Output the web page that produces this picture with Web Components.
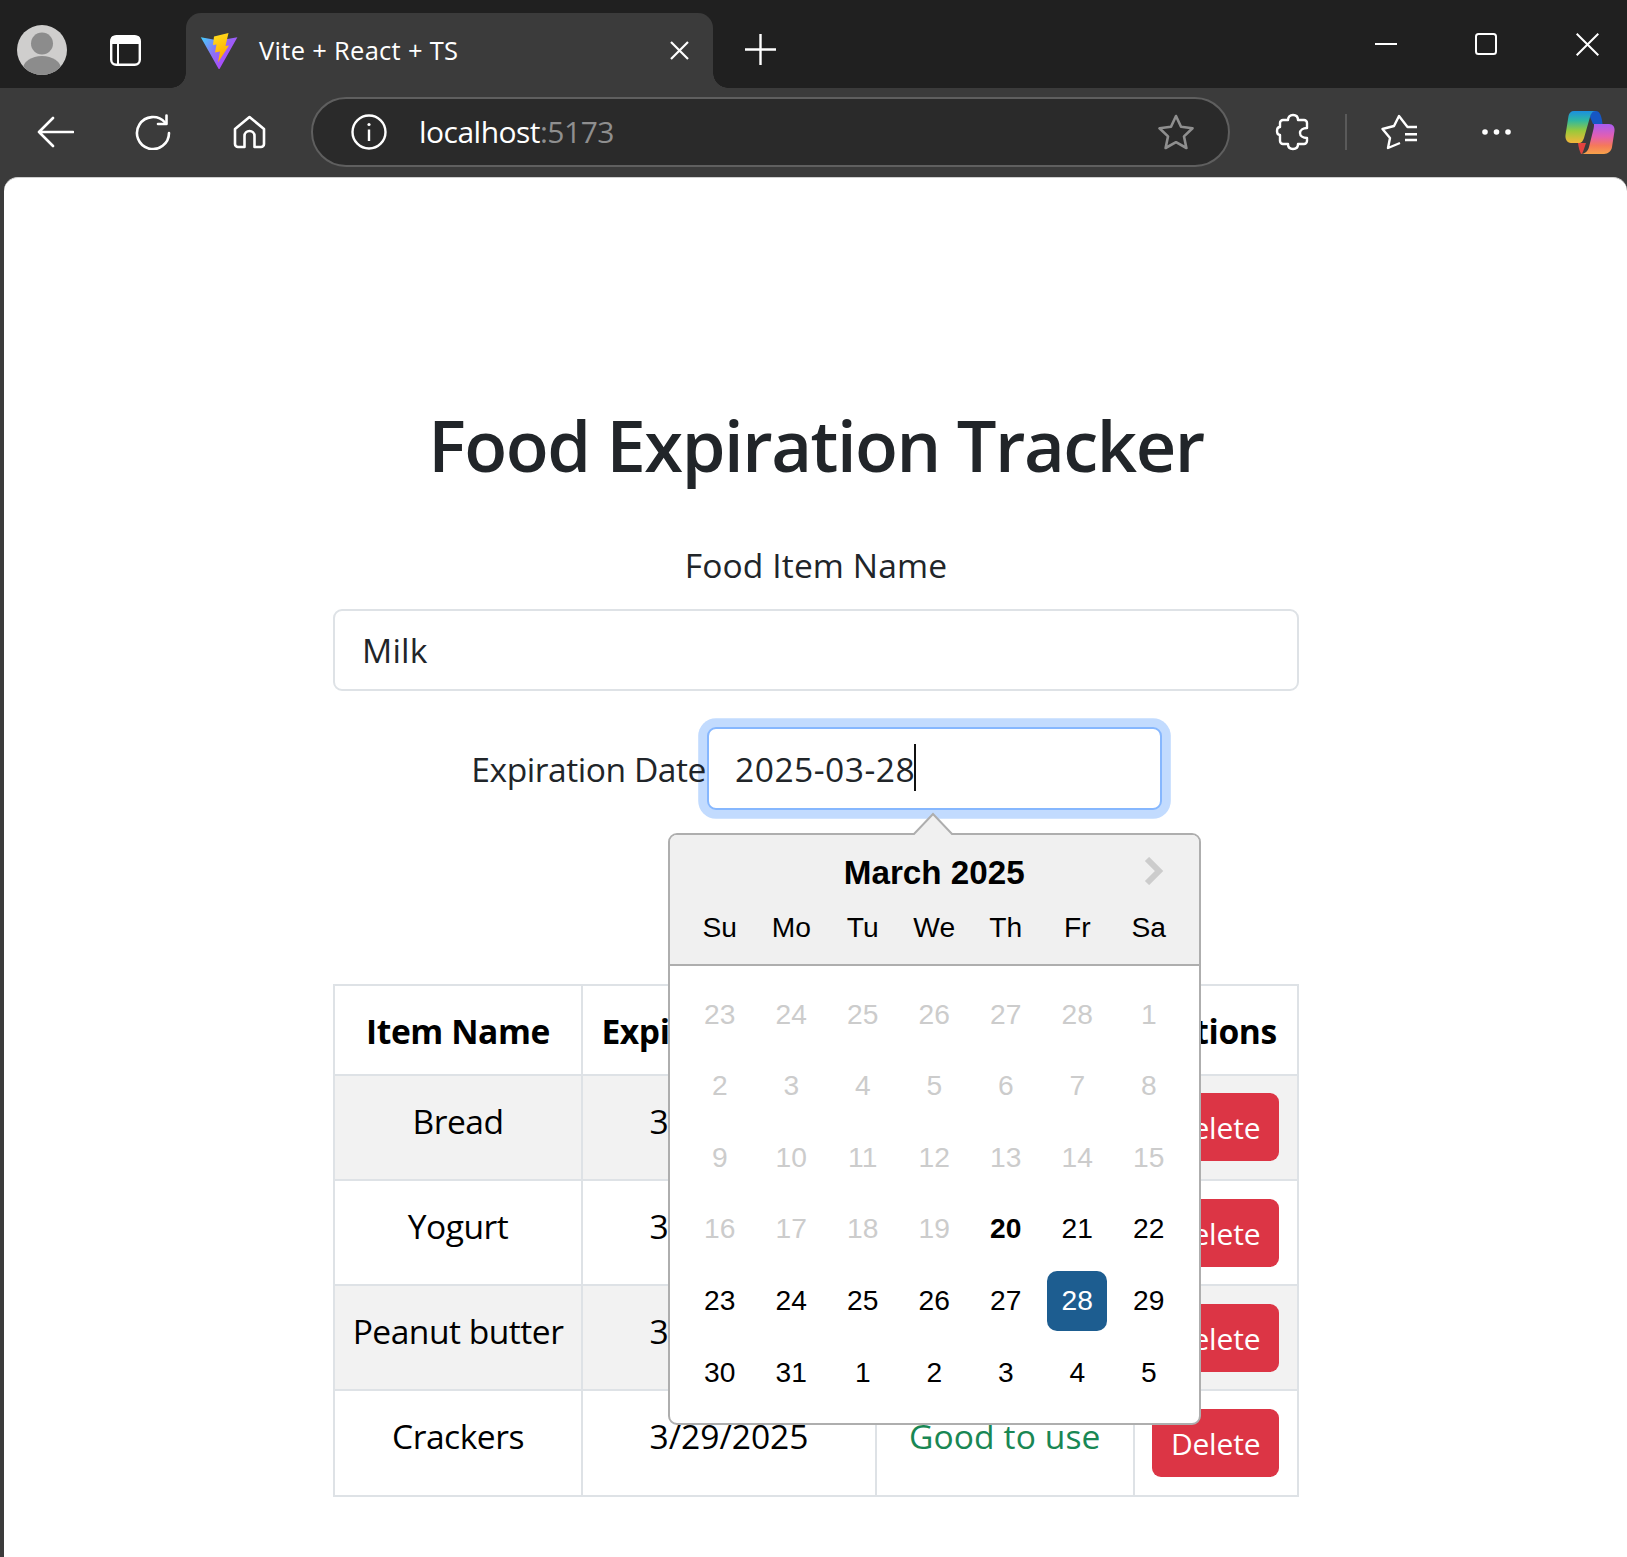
<!DOCTYPE html>
<html lang="en">
<head>
<meta charset="utf-8">
<title>Vite + React + TS</title>
<style>
    html, body { margin: 0; padding: 0; height: 100%; overflow: hidden; background: #3b3b3b; }
    body { font-family: "Open Sans", "Noto Sans", sans-serif; }
</style>
</head>
<body>
<browser-window>
    <tracker-page>
        <food-form></food-form>
        <food-table></food-table>
    </tracker-page>
</browser-window>

<template id="browser_window_tpl">
    <style>
        :host { display: flex; flex-direction: column; height: 100vh; background: #3b3b3b; color: #fff; }
        .strip { display: flex; align-items: flex-end; height: 88px; background: #202020; padding-left: 17px; flex: none; box-sizing: border-box; }
        .avatar { width: 50px; height: 50px; margin-bottom: 13px; }
        .tabs-icon { width: 31px; height: 31px; margin: 0 0 22px 43px; }
        .tab { position: relative; display: flex; align-items: center; width: 527px; height: 75px; margin-left: 45px; background: #3b3b3b; border-radius: 15px 15px 0 0; box-sizing: border-box; padding: 0 24px 0 14px; }
        .tab::before, .tab::after { content: ""; position: absolute; bottom: 0; width: 15px; height: 15px; }
        .tab::before { left: -15px; background: radial-gradient(circle at 0 0, #202020 14.5px, #3b3b3b 15px); }
        .tab::after { right: -15px; background: radial-gradient(circle at 100% 0, #202020 14.5px, #3b3b3b 15px); }
        .favicon { width: 38px; height: 37px; flex: none; }
        .tab-title { margin: 0 0 1px 21px; font-size: 25.5px; letter-spacing: .3px; white-space: nowrap; flex: 1; }
        .tab-close { width: 19px; height: 19px; flex: none; }
        .new-tab { width: 31px; height: 31px; margin: 0 0 23px 32px; }
        .window-buttons { display: flex; margin-left: auto; margin-bottom: 33px; align-items: center; height: 22px; padding-right: 28px; }
        .window-buttons svg { display: block; }
        .minimize { width: 22px; height: 22px; }
        .maximize { width: 22px; height: 22px; margin-left: 78.5px; }
        .close { width: 23px; height: 23px; margin-left: 79px; }
        .toolbar { display: flex; align-items: center; height: 89px; flex: none; padding-left: 37px; box-sizing: border-box; padding-bottom: 1px; }
        .toolbar svg { display: block; flex: none; }
        .back { width: 37px; height: 32px; }
        .reload { width: 36px; height: 36px; margin-left: 61px; }
        .home { width: 33px; height: 34px; margin-left: 62px; }
        .address { display: flex; align-items: center; width: 919px; height: 70px; margin-left: 45px; background: #2a2a2a; border: 2px solid #5f5f5f; border-radius: 35px; box-sizing: border-box; padding-left: 38px; }
        .info { width: 36px; height: 36px; }
        .url { margin: 0 0 2px 32px; font-size: 30px; letter-spacing: -.52px; white-space: nowrap; }
        .url span { color: #8f8f8f; }
        .address .star { width: 36px; height: 36px; margin-left: auto; margin-right: 34px; }
        .puzzle { width: 34px; height: 38px; margin-left: 45px; }
        .divider { width: 2px; height: 36px; background: #5a5a5a; margin-left: 36px; }
        .favorites { width: 38px; height: 36px; margin-left: 33px; }
        .dots { width: 31px; height: 8px; margin-left: 63px; }
        .copilot { width: 52px; height: 47px; margin-left: 52px; }
        .page { flex: 1; min-height: 0; margin-left: 4px; background: #fff; border-top: 1px solid #cfcfcf; border-radius: 14px 14px 0 0; overflow: hidden; }
    </style>
    <div class="strip">
        <svg class="avatar" viewBox="0 0 50 50"><defs><clipPath id="av"><circle cx="25" cy="25" r="25"/></clipPath></defs><circle cx="25" cy="25" r="25" fill="#cfcecd"/><g clip-path="url(#av)" fill="#8c8c8c"><circle cx="25" cy="18.500" r="11"/><ellipse cx="25" cy="44" rx="19" ry="13"/></g></svg>
        <svg class="tabs-icon" viewBox="0 0 31 31" fill="none" stroke="#fff"><rect x="1.2" y="1.2" width="28.6" height="28.6" rx="5" stroke-width="2.4"/><path d="M1 4a3 3 0 0 1 3-3h23a3 3 0 0 1 3 3v5H1z" fill="#fff" stroke="none"/><path d="M8 8v22" stroke-width="2"/></svg>
        <div class="tab">
            <svg class="favicon" viewBox="0 0 38 37">
                <defs>
                    <linearGradient id="vt" x1="0" y1="0" x2="1" y2=".7"><stop offset="0" stop-color="#41d1ff"/><stop offset=".45" stop-color="#8a73f5"/><stop offset="1" stop-color="#bd34fe"/></linearGradient>
                    <linearGradient id="vb" x1="0" y1="0" x2=".3" y2="1"><stop offset="0" stop-color="#ffe11f"/><stop offset="1" stop-color="#ffa800"/></linearGradient>
                </defs>
                <path d="M.8 5.3 18.4 36.6c.4.7 1 .7 1.4 0L37.4 5.3 19 8.4z" fill="url(#vt)"/>
                <path d="M14 4.5 28.5 1 25.5 14 29 13.5 18 30.5 20 19.5 15 20.5 16.5 12.5 13 13z" fill="url(#vb)"/>
            </svg>
            <span class="tab-title">Vite + React + TS</span>
            <svg class="tab-close" viewBox="0 0 19 19" stroke="#fff" stroke-width="2.2"><path d="M1 1 18 18M18 1 1 18"/></svg>
        </div>
        <svg class="new-tab" viewBox="0 0 31 31" stroke="#fff" stroke-width="2.4"><path d="M15.5 0V31M0 15.5H31"/></svg>
        <div class="window-buttons">
            <svg class="minimize" viewBox="0 0 22 22" stroke="#fff" stroke-width="2"><path d="M0 11H22"/></svg>
            <svg class="maximize" viewBox="0 0 22 22" fill="none" stroke="#fff" stroke-width="2"><rect x="1" y="1" width="20" height="20" rx="2.5"/></svg>
            <svg class="close" viewBox="0 0 23 23" stroke="#fff" stroke-width="2"><path d="M.7.7 22.3 22.3M22.3.7.7 22.3"/></svg>
        </div>
    </div>
    <div class="toolbar">
        <svg class="back" viewBox="0 0 37 32" fill="none" stroke="#fff" stroke-width="2.6" stroke-linecap="round" stroke-linejoin="round"><path d="M36 16H2M16 2 2 16 16 30"/></svg>
        <svg class="reload" viewBox="0 0 36 36" fill="none" stroke="#fff" stroke-width="2.6" stroke-linecap="round" stroke-linejoin="round"><path d="M30 8.5A16 16 0 1 0 34 19"/><path d="M31.5 1.5V10H23"/></svg>
        <svg class="home" viewBox="0 0 33 34" fill="none" stroke="#fff" stroke-width="2.6" stroke-linejoin="round"><path d="M16.5 2 2 14V29a3 3 0 0 0 3 3h6.5V21a5 5 0 0 1 10 0V32H28a3 3 0 0 0 3-3V14z"/></svg>
        <div class="address">
            <svg class="info" viewBox="0 0 36 36" fill="none" stroke="#fff" stroke-width="2.4"><circle cx="18" cy="18" r="16.5"/><path d="M18 15.5V27"/><circle cx="18" cy="10.5" r="1.6" fill="#fff" stroke="none"/></svg>
            <span class="url">localhost<span>:5173</span></span>
            <svg class="star" viewBox="0 0 36 36" fill="none" stroke="#8f8f8f" stroke-width="2.6" stroke-linejoin="round"><path d="M18 2 23 12.8 34.5 14.3 26 22.4 28.4 34 18 28.2 7.6 34 10 22.4 1.5 14.3 13 12.8z"/></svg>
        </div>
        <svg class="puzzle" viewBox="5 7 34 38" fill="none" stroke="#fff" stroke-width="2.4" stroke-linejoin="round"><path d="M18 14c0-3 2-5 5-5s5 2 5 5h6a3 3 0 0 1 3 3v5c-4 0-7 2-7 5s3 5 7 5v3a3 3 0 0 1-3 3h-6c0 3-2 5-5 5s-5-2-5-5h-5a3 3 0 0 1-3-3v-6c-2 0-3-2-3-4s1-4 3-4v-4a3 3 0 0 1 3-3z"/></svg>
        <div class="divider"></div>
        <svg class="favorites" viewBox="110 8 38 36" fill="none" stroke="#fff" stroke-width="2.4" stroke-linejoin="round"><path d="M147 21H137.500L129 10 124 20 112.500 23 120 32 118 42 130 37"/><path d="M135 28.300H147M135 34H147"/></svg>
        <svg class="dots" viewBox="0 0 31 8" fill="#fff"><circle cx="4" cy="4" r="2.800"/><circle cx="15.5" cy="4" r="2.800"/><circle cx="27" cy="4" r="2.800"/></svg>
        <svg class="copilot" viewBox="10 8 52 47">
            <defs>
                <linearGradient id="cl" x1="0" y1="0" x2="0" y2="1"><stop offset="0" stop-color="#1b8fe0"/><stop offset=".3" stop-color="#30b8a0"/><stop offset=".62" stop-color="#9ac93a"/><stop offset="1" stop-color="#f4b63a"/></linearGradient>
                <linearGradient id="cr" x1="0" y1="0" x2="0" y2="1"><stop offset="0" stop-color="#a95cf2"/><stop offset=".42" stop-color="#e35fb0"/><stop offset=".72" stop-color="#f5795a"/><stop offset="1" stop-color="#f7a24a"/></linearGradient>
            </defs>
            <path d="M38 10H42C45.500 10 47.500 14 48.500 23H39L36 16C36.500 13 37 11 38 10Z" fill="#1657c4"/>
            <path d="M20 10C17 10 15 12 14.500 15L11.500 34C11 38 13 42 17 42H25C27.500 42 29 40 30 37L36 16C37 13 38 10 42 10Z" fill="url(#cl)"/>
            <path d="M24 42H32L30 48C29 51 28 53 27 53C25.500 50 24.500 46 24 42Z" fill="#e2433f"/>
            <path d="M40 23H55C59 23 61 26 60.500 30L58 46C57.500 50 54 53 50 53H27C31 53 34 50 35 46L39.500 28C40 26 40 24 40 23Z" fill="url(#cr)"/>
        </svg>
    </div>
    <div class="page"><slot></slot></div>
</template>

<template id="tracker_page_tpl">
    <style>
        :host { display: block; padding: 225px 0 0 329px; }
        .column { width: 966px; }
        h1 { margin: 0 0 52px; font-size: 70.4px; font-weight: 600; line-height: 84px; text-align: center; color: #212529; letter-spacing: -1.45px; }
    </style>
    <div class="column">
        <h1>Food Expiration Tracker</h1>
        <slot></slot>
    </div>
</template>

<template id="food_form_tpl">
    <style>
        :host { display: block; color: #212529; font-size: 33.6px; line-height: 52.8px; }
        .name-label { display: block; text-align: center; margin-bottom: 17px; letter-spacing: .1px; }
        .text-input { height: 82px; box-sizing: border-box; border: 2px solid #dee2e6; border-radius: 9px; padding: 13px 27px; background: #fff; letter-spacing: .2px; }
        .date-row { display: flex; justify-content: flex-end; align-items: center; margin-top: 36px; padding-right: 137px; }
        /* the last letter sits on the focus ring, and stays readable */
        .date-label { position: relative; z-index: 1; letter-spacing: -.45px; white-space: nowrap; margin-top: 2px; }
        date-field { margin-left: 1px; }
    </style>
    <label class="name-label">Food Item Name</label>
    <div class="text-input">Milk</div>
    <div class="date-row">
        <span class="date-label">Expiration Date</span>
        <date-field value="2025-03-28"></date-field>
    </div>
</template>

<template id="date_field_tpl">
    <style>
        :host { display: block; position: relative; width: 455px; height: 83px; flex: none; }
        .input { height: 83px; box-sizing: border-box; border: 2px solid #86b7fe; border-radius: 9px; padding: 14px 26px; background: #fff; box-shadow: 0 0 0 8.8px #c2dbfe; letter-spacing: .5px; white-space: nowrap; }
        .caret { display: inline-block; width: 2px; height: 47px; background: #111; vertical-align: -9px; margin-left: -1px; }
        date-picker { position: absolute; left: -39px; top: 106px; letter-spacing: 0; }
    </style>
    <div class="input"><span class="value"></span><span class="caret"></span></div>
    <date-picker month="March 2025"></date-picker>
</template>

<template id="date_picker_tpl">
    <style>
        :host { display: block; width: 533px; height: 592px; font-family: "Liberation Sans", Arial, sans-serif; color: #000; }
        .box { position: relative; height: 100%; box-sizing: border-box; border: 2px solid #aeaeae; border-radius: 9px; background: #fff; }
        .tip { position: absolute; left: 242px; top: -23px; width: 42px; height: 23px; display: block; }
        .header { height: 131px; box-sizing: border-box; background: #f0f0f0; border-bottom: 2px solid #aeaeae; border-radius: 7px 7px 0 0; padding: 19px 14px 0; position: relative; }
        .month { font-size: 33.2px; font-weight: 700; line-height: 38px; width: 500.500px; text-align: center; }
        .next { position: absolute; right: 35px; top: 22px; width: 20px; height: 28px; }
        .grid { display: grid; grid-template-columns: repeat(7, 71.5px); }
        .names { margin-top: 15px; font-size: 28.2px; line-height: 40px; text-align: center; }
        .days { padding: 13px 14px 0; font-size: 28.2px; line-height: 58px; text-align: center; grid-auto-rows: 71.6px; align-items: center; }
        .days span { display: block; width: 60px; height: 60px; justify-self: center; border-radius: 10px; }
        .off { color: #ccc; }
        .today { font-weight: 700; }
        .selected { background: #1d5d90; color: #fff; }
    </style>
    <div class="box">
        <svg class="tip" viewBox="0 0 42 23"><path d="M0 22H2L21 2 40 22H42V25H0z" fill="#f0f0f0" stroke="none"/><path d="M0 22H2L21 2 40 22H42" fill="none" stroke="#aeaeae" stroke-width="2"/></svg>
        <div class="header">
            <div class="month"></div>
            <svg class="next" viewBox="0 0 20 28" fill="none" stroke="#ccc" stroke-width="6"><path d="M3 2 15 14 3 26"/></svg>
            <div class="grid names"></div>
        </div>
        <div class="grid days"></div>
    </div>
</template>

<template id="food_table_tpl">
    <style>
        :host { display: block; margin-top: 174px; color: #000; font-size: 33.6px; line-height: 52.8px; }
        table { border-collapse: collapse; table-layout: fixed; width: 964px; letter-spacing: -.5px; }
        th, td { border: 2px solid #dee2e6; padding: 19px 17.6px 16.2px; vertical-align: top; text-align: center; white-space: nowrap; overflow: hidden; }
        th { letter-spacing: -.4px; padding-top: 19.6px; padding-bottom: 15.6px; }
        td.actions { padding: 17.6px; }
        tbody tr:nth-child(odd) td { background: #f2f2f2; }
        .date { letter-spacing: 0; }
        .good { color: #198754; letter-spacing: .1px; }
    </style>
    <table>
        <colgroup><col style="width:248px"><col style="width:294px"><col style="width:257.500px"><col style="width:164.500px"></colgroup>
        <thead><tr><th>Item Name</th><th>Expiration Date</th><th></th><th>Actions</th></tr></thead>
        <tbody></tbody>
    </table>
</template>

<template id="delete_button_tpl">
    <style>
        :host { display: block; }
        .btn { display: flex; align-items: center; justify-content: center; width: 127px; height: 68px; box-sizing: border-box; padding-top: 3px; background: #dc3545; color: #fff; border-radius: 9px; font-size: 30px; letter-spacing: -.2px; }
    </style>
    <div class="btn"><slot></slot></div>
</template>

<script type="module">
    function shadow(el, id) {
        el.attachShadow({mode: 'open'});
        el.shadowRoot.appendChild(document.getElementById(id).content.cloneNode(true));
    }

    class BrowserWindow extends HTMLElement {
        constructor() { super(); shadow(this, 'browser_window_tpl'); }
    }
    class TrackerPage extends HTMLElement {
        constructor() { super(); shadow(this, 'tracker_page_tpl'); }
    }
    class FoodForm extends HTMLElement {
        constructor() { super(); shadow(this, 'food_form_tpl'); }
    }
    class DateField extends HTMLElement {
        constructor() { super(); shadow(this, 'date_field_tpl'); }
        connectedCallback() {
            this.shadowRoot.querySelector('.value').textContent = this.getAttribute('value');
        }
    }
    class DatePicker extends HTMLElement {
        constructor() { super(); shadow(this, 'date_picker_tpl'); }
        connectedCallback() {
            const root = this.shadowRoot;
            root.querySelector('.month').textContent = this.getAttribute('month');
            root.querySelector('.names').innerHTML = ['Su', 'Mo', 'Tu', 'We', 'Th', 'Fr', 'Sa'].map(n => `<div>${n}</div>`).join('');
            // days before today can't be picked, so they're greyed
            const days = [23, 24, 25, 26, 27, 28];
            for (let d = 1; d <= 31; d++) days.push(d);
            for (let d = 1; d <= 5; d++) days.push(d);
            root.querySelector('.days').innerHTML = days.map((d, i) => {
                let cls = '';
                if (i < 25) cls = 'off';
                if (i === 25) cls = 'today';
                if (i === 33) cls = 'selected';
                return `<span class="${cls}">${d}</span>`;
            }).join('');
        }
    }
    class FoodTable extends HTMLElement {
        constructor() { super(); shadow(this, 'food_table_tpl'); }
        connectedCallback() {
            // the open date picker covers the third column except on the last row
            const items = [
                ['Bread', '3/29/2025', ''],
                ['Yogurt', '3/29/2025', ''],
                ['Peanut butter', '3/29/2025', ''],
                ['Crackers', '3/29/2025', 'Good to use']
            ];
            this.shadowRoot.querySelector('tbody').innerHTML = items.map(([name, date, status]) => `
                <tr><td>${name}</td><td class="date">${date}</td><td class="good">${status}</td>
                <td class="actions"><delete-button>Delete</delete-button></td></tr>`).join('');
        }
    }
    class DeleteButton extends HTMLElement {
        constructor() { super(); shadow(this, 'delete_button_tpl'); }
    }

    customElements.define('delete-button', DeleteButton);
    customElements.define('date-picker', DatePicker);
    customElements.define('date-field', DateField);
    customElements.define('food-form', FoodForm);
    customElements.define('food-table', FoodTable);
    customElements.define('tracker-page', TrackerPage);
    customElements.define('browser-window', BrowserWindow);
</script>
</body>
</html>
